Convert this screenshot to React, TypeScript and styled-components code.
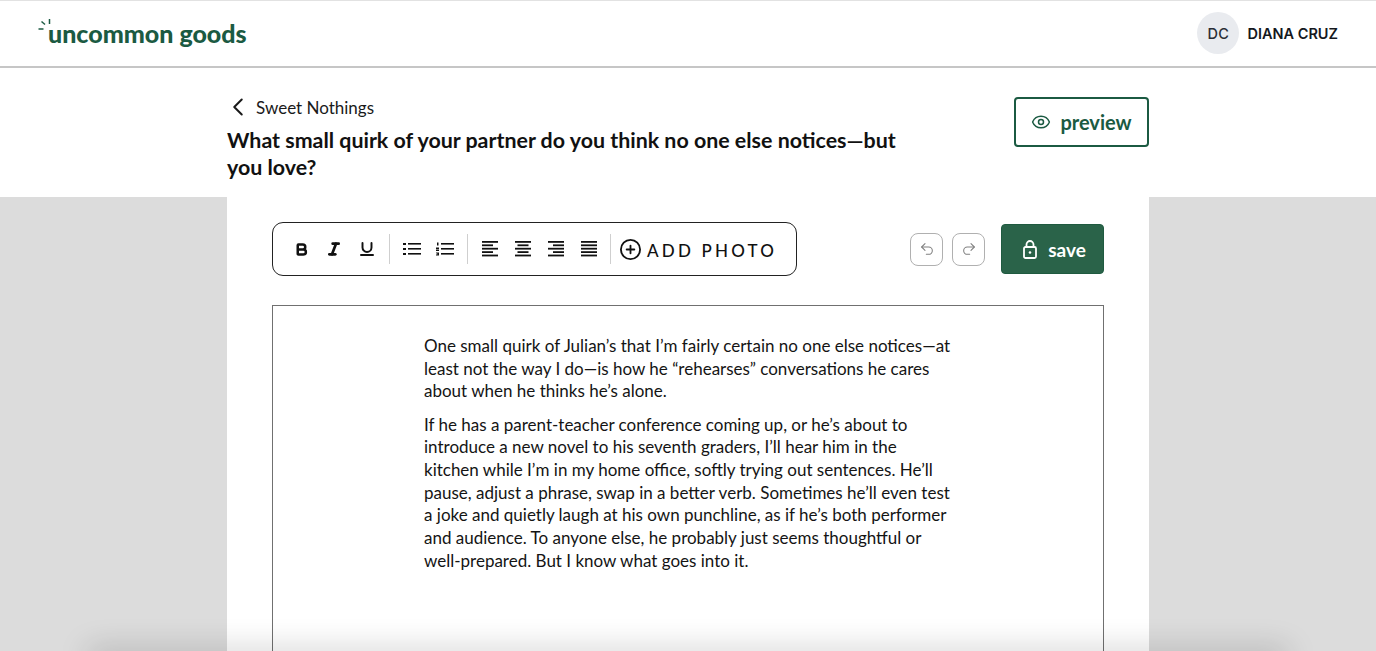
import styled, { createGlobalStyle } from 'styled-components';
import {
    Bold,
    ChevronLeft,
    CirclePlus,
    Eye,
    Italic,
    Redo2,
    Underline,
    Undo2,
} from 'lucide-react';

const GlobalStyle = createGlobalStyle`
    html, body {
        margin: 0;
        padding: 0;
        height: 100%;
        overflow: hidden;
        background: #dcdcdc;
    }
    * {
        box-sizing: border-box;
    }
    body {
        font-family: 'Lato', 'Liberation Sans', sans-serif;
        color: #111;
    }
`;

const Page = styled.div`
    position: relative;
    height: 651px;
    display: flex;
    flex-direction: column;
    overflow: hidden;
`;

const Header = styled.header`
    height: 68px;
    flex: none;
    background: #fff;
    border-top: 1px solid #e2e2e2;
    border-bottom: 2px solid #c6c6c6;
    padding: 0 38px;
    display: flex;
    align-items: center;
    justify-content: space-between;
`;

const Logo = styled.div`
    display: flex;
    align-items: center;
    color: #1b5a42;
    font-size: 25px;
    font-weight: 900;
    line-height: 30px;
    margin-top: -2px;
`;

const Spark = styled.svg`
    width: 13px;
    height: 13px;
    margin-top: -16px;
    margin-right: -3px;
    flex: none;
`;

const UserBox = styled.div`
    display: flex;
    align-items: center;
    gap: 8px;
    margin-top: -1px;
`;

const Avatar = styled.div`
    width: 42px;
    height: 42px;
    border-radius: 50%;
    background: #e9ebef;
    color: #2a2e36;
    font-family: 'Inter', sans-serif;
    font-size: 14.5px;
    font-weight: 500;
    letter-spacing: 0.5px;
    display: flex;
    align-items: center;
    justify-content: center;
`;

const UserName = styled.span`
    font-family: 'Inter', sans-serif;
    font-size: 14.5px;
    font-weight: 600;
    color: #15181d;
`;

const TitleBand = styled.section`
    height: 129px;
    flex: none;
    background: #fff;
    display: flex;
    justify-content: center;
`;

const Column = styled.div`
    width: 922px;
    display: flex;
    justify-content: space-between;
`;

const TitleBlock = styled.div`
    width: 680px;
    padding-top: 26px;
`;

const Crumb = styled.div`
    display: flex;
    align-items: center;
    gap: 3px;
    height: 26px;
    margin-left: -4px;
    font-size: 17px;
    color: #1a1a1a;
`;

const Title = styled.h1`
    margin: 7px 0 0;
    font-size: 21.4px;
    line-height: 26.5px;
    font-weight: 700;
    color: #111;
`;

const PreviewButton = styled.button`
    width: 135px;
    height: 50px;
    margin-top: 29px;
    background: #fff;
    border: 2px solid #1b5a42;
    border-radius: 4px;
    color: #1b5a42;
    font-family: inherit;
    font-size: 20px;
    font-weight: 700;
    display: flex;
    align-items: center;
    justify-content: center;
    gap: 9px;
`;

const Body = styled.main`
    flex: 1;
    min-height: 0;
    display: flex;
    justify-content: center;
`;

const Sheet = styled.div`
    width: 922px;
    background: #fff;
    padding: 25px 45px 0;
`;

const ToolRow = styled.div`
    display: flex;
    align-items: center;
    justify-content: space-between;
    height: 54px;
`;

const Toolbar = styled.div`
    width: 525px;
    height: 54px;
    border: 1.5px solid #222;
    border-radius: 11px;
    padding-left: 11.5px;
    display: flex;
    align-items: center;
`;

const ToolButton = styled.span`
    width: 33px;
    height: 33px;
    flex: none;
    color: #111;
    display: flex;
    align-items: center;
    justify-content: center;
`;

const ToolDivider = styled.span<{ $tight?: boolean }>`
    width: 1px;
    height: 30px;
    flex: none;
    margin: 0 5.5px 0 ${(p) => (p.$tight ? '4px' : '5.5px')};
    background: #cfcfcf;
`;

const AddPhoto = styled.span`
    display: flex;
    align-items: center;
    gap: 5px;
    margin-left: 3px;
    font-size: 17px;
    font-weight: 500;
    letter-spacing: 3.2px;
    color: #111;
`;

const AddPhotoLabel = styled.span`
    padding-top: 2px;
`;

const Actions = styled.div`
    display: flex;
    align-items: center;
`;

const HistoryButton = styled.button`
    width: 33px;
    height: 33px;
    margin-right: 9px;
    padding: 0;
    background: #fff;
    border: 1.5px solid #b0b0b0;
    border-radius: 8px;
    color: #808080;
    display: flex;
    align-items: center;
    justify-content: center;
`;

const SaveButton = styled.button`
    width: 103px;
    height: 50px;
    margin-left: 7px;
    padding: 0 0 0 4px;
    background: #2a6349;
    border: 1px solid #1f5a40;
    border-radius: 4px;
    color: #fff;
    font-family: inherit;
    font-size: 19px;
    font-weight: 700;
    display: flex;
    align-items: center;
    justify-content: center;
    gap: 11px;
`;

const Editor = styled.div`
    margin-top: 29px;
    height: 400px;
    border: 1px solid #707070;
    padding: 29px 150px 0 151px;
`;

const Paragraph = styled.p`
    margin: 0 0 10.5px;
    font-size: 17px;
    line-height: 22.7px;
    color: #141414;
    white-space: nowrap;
`;

const BottomShade = styled.div`
    position: absolute;
    left: 90px;
    right: 90px;
    bottom: -12px;
    height: 12px;
    pointer-events: none;
    box-shadow: 0 0 30px 2px rgba(0, 0, 0, 0.22);
`;

const ListBullet = () => (
    <svg width="18" height="14" viewBox="0 0 18 14" fill="#111">
        <rect x="0" y="1" width="3" height="2" />
        <rect x="0" y="6" width="3" height="2" />
        <rect x="0" y="11" width="3" height="2" />
        <rect x="5" y="1" width="13" height="1.6" />
        <rect x="5" y="6" width="13" height="1.6" />
        <rect x="5" y="11" width="13" height="1.6" />
    </svg>
);

const ListNumber = () => (
    <svg width="18" height="14" viewBox="0 0 18 14" fill="#111">
        <rect x="1" y="0.5" width="1.5" height="3" />
        <path d="M0 5.500h3v1.500H1.500v.5H3V9H0V7.500h1.500V7H0z" />
        <path d="M0 10.500h3v3H0v-1h1.700v-.3H.7v-.7h1v-.3H0z" />
        <rect x="5" y="1" width="13" height="1.6" />
        <rect x="5" y="6" width="13" height="1.6" />
        <rect x="5" y="11" width="13" height="1.6" />
    </svg>
);

// line widths from left edge, per alignment
const AlignIcon = ({ mode }: { mode: 'left' | 'center' | 'right' | 'full' }) => {
    const widths = [16, 11, 16, 11, 16];
    return (
        <svg width="16" height="16" viewBox="0 0 16 16" fill="#111">
            {widths.map((w, i) => {
                const width = mode === 'full' ? 16 : w;
                const x =
                    mode === 'right' ? 16 - width : mode === 'center' ? (16 - width) / 2 : 0;
                return <rect key={i} x={x} y={i * 3.4} width={width} height="1.8" />;
            })}
        </svg>
    );
};

const LockIcon = () => (
    <svg width="14" height="19" viewBox="0 0 14 19" fill="none" stroke="#fff" strokeWidth="1.8">
        <rect x="1" y="7" width="12" height="11" rx="1.5" />
        <path d="M3.500 7V4.500a3.500 3.500 0 0 1 7 0V7" />
        <circle cx="7" cy="12.500" r="1.300" fill="#fff" stroke="none" />
    </svg>
);

const PARAGRAPHS = [
    [
        'One small quirk of Julian’s that I’m fairly certain no one else notices—at',
        'least not the way I do—is how he “rehearses” conversations he cares',
        'about when he thinks he’s alone.',
    ],
    [
        'If he has a parent-teacher conference coming up, or he’s about to',
        'introduce a new novel to his seventh graders, I’ll hear him in the',
        'kitchen while I’m in my home office, softly trying out sentences. He’ll',
        'pause, adjust a phrase, swap in a better verb. Sometimes he’ll even test',
        'a joke and quietly laugh at his own punchline, as if he’s both performer',
        'and audience. To anyone else, he probably just seems thoughtful or',
        'well-prepared. But I know what goes into it.',
    ],
];

export default function App() {
    return (
        <Page>
            <GlobalStyle />
            <Header>
                <Logo>
                    <Spark viewBox="0 0 13 13" fill="none" stroke="#1b5a42" strokeWidth="1.5">
                        <path d="M11.500 1v5" />
                        <path d="M3.500 3.500l3.500 3" />
                        <path d="M0.500 11h5" />
                    </Spark>
                    uncommon goods
                </Logo>
                <UserBox>
                    <Avatar>DC</Avatar>
                    <UserName>DIANA CRUZ</UserName>
                </UserBox>
            </Header>
            <TitleBand>
                <Column>
                    <TitleBlock>
                        <Crumb>
                            <ChevronLeft size={30} strokeWidth={1.6} />
                            Sweet Nothings
                        </Crumb>
                        <Title>
                            What small quirk of your partner do you think no one else notices—but you love?
                        </Title>
                    </TitleBlock>
                    <PreviewButton>
                        <Eye size={20} strokeWidth={1.8} />
                        preview
                    </PreviewButton>
                </Column>
            </TitleBand>
            <Body>
                <Sheet>
                    <ToolRow>
                        <Toolbar>
                            <ToolButton><Bold size={15} strokeWidth={4} /></ToolButton>
                            <ToolButton><Italic size={16} strokeWidth={4} /></ToolButton>
                            <ToolButton><Underline size={18} strokeWidth={2.6} /></ToolButton>
                            <ToolDivider />
                            <ToolButton><ListBullet /></ToolButton>
                            <ToolButton><ListNumber /></ToolButton>
                            <ToolDivider />
                            <ToolButton><AlignIcon mode="left" /></ToolButton>
                            <ToolButton><AlignIcon mode="center" /></ToolButton>
                            <ToolButton><AlignIcon mode="right" /></ToolButton>
                            <ToolButton><AlignIcon mode="full" /></ToolButton>
                            <ToolDivider $tight />
                            <AddPhoto>
                                <CirclePlus size={23} strokeWidth={1.9} />
                                <AddPhotoLabel>ADD PHOTO</AddPhotoLabel>
                            </AddPhoto>
                        </Toolbar>
                        <Actions>
                            <HistoryButton><Undo2 size={16} strokeWidth={1.6} /></HistoryButton>
                            <HistoryButton><Redo2 size={16} strokeWidth={1.6} /></HistoryButton>
                            <SaveButton>
                                <LockIcon />
                                save
                            </SaveButton>
                        </Actions>
                    </ToolRow>
                    <Editor>
                        {PARAGRAPHS.map((lines) => (
                            <Paragraph key={lines[0]}>
                                {lines.map((line) => (
                                    <span key={line}>
                                        {line}
                                        <br />
                                    </span>
                                ))}
                            </Paragraph>
                        ))}
                    </Editor>
                </Sheet>
            </Body>
            <BottomShade />
        </Page>
    );
}
